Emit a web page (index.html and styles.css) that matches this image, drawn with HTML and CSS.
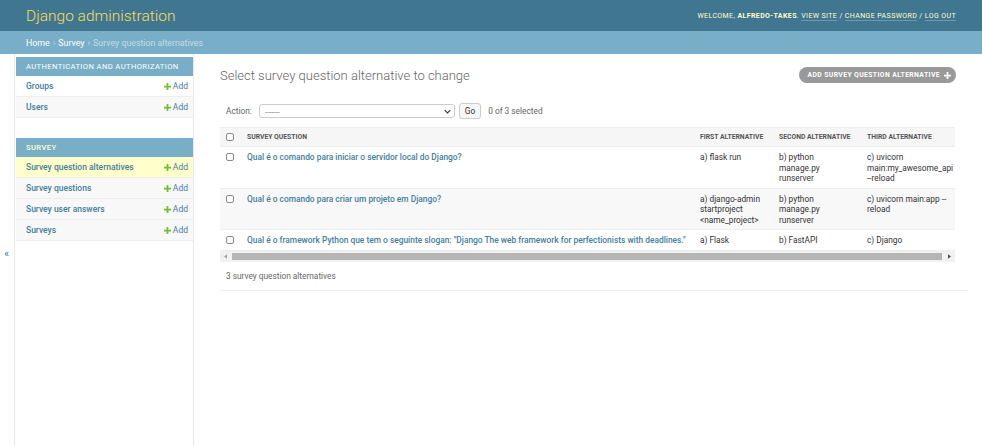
FILE: index.html
```html
<!DOCTYPE html>
<html lang="en">
<head>
<meta charset="utf-8">
<title>Select survey question alternative to change | Django site admin</title>
<link rel="stylesheet" href="styles.css">
</head>
<body>
<header class="header">
  <div class="branding">Django administration</div>
  <div class="user-tools">WELCOME, <strong>ALFREDO-TAKES</strong>. <a href="#">VIEW SITE</a> / <a href="#">CHANGE PASSWORD</a> / <a href="#">LOG OUT</a></div>
</header>
<nav class="breadcrumbs"><a href="#">Home</a><span class="sep">›</span><a href="#">Survey</a><span class="sep">›</span>Survey question alternatives</nav>
<div class="main">
  <button class="toggle-nav">«</button>
  <aside class="nav-sidebar">
    <div class="module">
      <div class="caption">AUTHENTICATION AND AUTHORIZATION</div>
      <div class="nav-row"><a href="#" class="model">Groups</a><a href="#" class="add"><svg class="plus" viewBox="0 0 8 8"><path d="M3 0h2v3h3v2H5v3H3V5H0V3h3z"/></svg>Add</a></div>
      <div class="nav-row alt"><a href="#" class="model">Users</a><a href="#" class="add"><svg class="plus" viewBox="0 0 8 8"><path d="M3 0h2v3h3v2H5v3H3V5H0V3h3z"/></svg>Add</a></div>
    </div>
    <div class="module">
      <div class="caption current">SURVEY</div>
      <div class="nav-row current"><a href="#" class="model">Survey question alternatives</a><a href="#" class="add"><svg class="plus" viewBox="0 0 8 8"><path d="M3 0h2v3h3v2H5v3H3V5H0V3h3z"/></svg>Add</a></div>
      <div class="nav-row alt"><a href="#" class="model">Survey questions</a><a href="#" class="add"><svg class="plus" viewBox="0 0 8 8"><path d="M3 0h2v3h3v2H5v3H3V5H0V3h3z"/></svg>Add</a></div>
      <div class="nav-row alt"><a href="#" class="model">Survey user answers</a><a href="#" class="add"><svg class="plus" viewBox="0 0 8 8"><path d="M3 0h2v3h3v2H5v3H3V5H0V3h3z"/></svg>Add</a></div>
      <div class="nav-row alt"><a href="#" class="model">Surveys</a><a href="#" class="add"><svg class="plus" viewBox="0 0 8 8"><path d="M3 0h2v3h3v2H5v3H3V5H0V3h3z"/></svg>Add</a></div>
    </div>
  </aside>
  <main class="content">
    <div class="content-head">
      <h1 class="title">Select survey question alternative to change</h1>
      <a href="#" class="addlink">ADD SURVEY QUESTION ALTERNATIVE<svg class="plus-w" viewBox="0 0 8 8"><path d="M3 0h2v3h3v2H5v3H3V5H0V3h3z"/></svg></a>
    </div>
    <div class="changelist">
      <div class="actions">
        <label class="action-label">Action:</label>
        <select class="action-select"><option>---------</option></select>
        <button class="go">Go</button>
        <span class="counter">0 of 3 selected</span>
      </div>
      <div class="results">
        <table class="result-list">
          <colgroup><col class="c0"><col class="c1"><col class="c2"><col class="c3"><col class="c4"></colgroup>
          <thead>
            <tr><th><input type="checkbox" class="cb"></th><th>SURVEY QUESTION</th><th>FIRST ALTERNATIVE</th><th>SECOND ALTERNATIVE</th><th>THIRD ALTERNATIVE</th></tr>
          </thead>
          <tbody>
            <tr><td><input type="checkbox" class="cb"></td><td><a href="#" class="q">Qual é o comando para iniciar o servidor local do Django?</a></td><td>a) flask run</td><td>b) python manage.py runserver</td><td>c) uvicorn main:my_awesome_api <span class="nw">--reload</span></td></tr>
            <tr class="alt"><td><input type="checkbox" class="cb"></td><td><a href="#" class="q">Qual é o comando para criar um projeto em Django?</a></td><td>a) django-admin startproject &lt;name_project&gt;</td><td>b) python manage.py runserver</td><td>c) uvicorn main:app --reload</td></tr>
            <tr><td><input type="checkbox" class="cb"></td><td><a href="#" class="q">Qual é o framework Python que tem o seguinte slogan: "Django The web framework for perfectionists with deadlines."</a></td><td>a) Flask</td><td>b) FastAPI</td><td>c) Django</td></tr>
          </tbody>
        </table>
      </div>
      <div class="hscroll" aria-hidden="true">
        <span class="hs-btn"><svg viewBox="0 0 4 6"><path d="M4 0v6L0 3z" fill="#a3a3a3"/></svg></span>
        <span class="hs-track"><span class="hs-thumb"></span></span>
        <span class="hs-btn"><svg viewBox="0 0 4 6"><path d="M0 0v6l4-3z" fill="#505050"/></svg></span>
      </div>
      <p class="paginator">3 survey question alternatives</p>
    </div>
  </main>
</div>
</body>
</html>
```

FILE: styles.css
```css
* { box-sizing: border-box; }
html, body { margin: 0; padding: 0; }
body {
  font-family: Roboto, "Liberation Sans", sans-serif;
  color: #333;
  background: #fff;
  font-size: 8.3px;
}
a { text-decoration: none; }

.header {
  height: 31px;
  background: #417690;
  display: flex;
  align-items: center;
  justify-content: space-between;
  padding: 0 26px;
}
.branding {
  color: #f5dd5d;
  font-size: 15.5px;
  font-weight: 300;
}
.user-tools {
  color: #ffc;
  font-size: 7px;
  letter-spacing: 0.4px;
}
.user-tools strong { font-weight: 700; }
.user-tools a {
  color: #ffc;
  border-bottom: 1px solid rgba(255,255,255,0.25);
}

.breadcrumbs {
  height: 23px;
  background: #79aec8;
  display: flex;
  align-items: center;
  padding: 0 26px;
  color: #c4dce8;
  font-size: 8.8px;
}
.breadcrumbs a { color: #fff; }
.breadcrumbs .sep { margin: 0 3px; }

.main {
  display: flex;
  min-height: calc(100vh - 54px);
}
.toggle-nav {
  width: 15px;
  flex: none;
  border: 0;
  border-right: 1px solid #eaeaea;
  background: #fff;
  color: #447e9b;
  font-size: 11px;
  padding: 6px 1px 0 0;
  font-family: Roboto, sans-serif;
}
.nav-sidebar {
  width: 179px;
  flex: none;
  border-right: 1px solid #eaeaea;
  padding: 3px 0 0 1px;
}
.module { margin-bottom: 20px; }
.caption {
  background: #79aec8;
  color: #fff;
  height: 19px;
  display: flex;
  align-items: center;
  padding-left: 10px;
  font-size: 7.6px;
  letter-spacing: 0.4px;
}
.caption.current { color: #ffc; font-weight: 500; }
.nav-row {
  height: 21px;
  display: flex;
  align-items: center;
  justify-content: space-between;
  padding: 0 5px 0 10px;
  border-bottom: 1px solid #eee;
  background: #fff;
}
.nav-row.alt { background: #f8f8f8; }
.nav-row.current { background: #ffc; }
.nav-row .model {
  color: #447e9b;
  font-size: 8.5px;
  font-weight: 500;
}
.nav-row .add {
  color: #447e9b;
  font-size: 8.5px;
  display: flex;
  align-items: center;
}
.plus { width: 7px; height: 7px; fill: #70bf2b; margin-right: 2px; }

.content {
  flex: 1;
  padding: 12px 26px 0 26px;
  min-width: 0;
}
.content-head {
  display: flex;
  align-items: center;
  justify-content: space-between;
  height: 18px;
}
.title {
  margin: 0;
  font-size: 13px;
  font-weight: 300;
  color: #666;
}
.addlink {
  display: flex;
  align-items: center;
  height: 16px;
  padding: 0 5px 0 8px;
  background: #999;
  border-radius: 8px;
  color: #fff;
  font-size: 6.8px;
  font-weight: 700;
  letter-spacing: 0.4px;
}
.plus-w { width: 7px; height: 7px; fill: #fff; margin-left: 4px; }

.changelist { margin-right: -12px; margin-top: 18px; }
.actions {
  display: flex;
  align-items: center;
  height: 18px;
  padding-left: 6px;
  color: #666;
}
.action-label { margin-right: 7px; }
.action-select {
  appearance: none;
  -webkit-appearance: none;
  width: 196px;
  height: 14px;
  border: 1px solid #ccc;
  border-radius: 3px;
  padding: 0 5px;
  font-family: Roboto, sans-serif;
  font-size: 6px;
  color: #333;
  background: #fff url("data:image/svg+xml;utf8,<svg xmlns='http://www.w3.org/2000/svg' viewBox='0 0 10 6'><path d='M1 1l4 4 4-4' fill='none' stroke='%23333' stroke-width='1.6'/></svg>") no-repeat right 3px center / 7px 5px;
}
.go {
  margin-left: 4px;
  height: 16px;
  padding: 0 5px;
  border: 1px solid #ccc;
  border-radius: 3px;
  background: #f6f6f6;
  color: #333;
  font-family: Roboto, sans-serif;
  font-size: 8.3px;
}
.counter { margin-left: 7px; color: #666; }

.results {
  width: calc(100% - 13px);
  overflow: hidden;
  margin-top: 7px;
}
.result-list {
  table-layout: fixed;
  width: 745px;
  border-collapse: collapse;
}
.c0 { width: 21px; }
.c1 { width: 453px; }
.c2 { width: 79px; }
.c3 { width: 88px; }
.c4 { width: 104px; }
.result-list th {
  background: #f6f6f6;
  border-top: 1px solid #eee;
  border-bottom: 1px solid #eee;
  text-align: left;
  font-size: 6.8px;
  font-weight: 700;
  color: #555;
  padding: 4px 6px;
  line-height: 10px;
  height: 19px;
}
.result-list td {
  padding: 5px 6px 4px;
  line-height: 10.5px;
  vertical-align: top;
  border-bottom: 1px solid #eee;
  color: #333;
  font-size: 8.3px;
  overflow-wrap: break-word;
}
.result-list tr.alt td { background: #f8f8f8; }
.result-list td:nth-child(2) { white-space: nowrap; }
.nw { white-space: nowrap; }
.q { color: #447e9b; font-weight: 500; font-size: 8.4px; }
.cb {
  appearance: none;
  -webkit-appearance: none;
  width: 8px;
  height: 8px;
  margin: 1px 0 0 0;
  border: 1px solid #8a8a8a;
  border-radius: 2px;
  background: #fff;
  vertical-align: top;
}

.hscroll {
  width: calc(100% - 13px);
  height: 11px;
  background: #f1f1f1;
  display: flex;
}
.hs-btn {
  width: 11px;
  flex: none;
  display: flex;
  align-items: center;
  justify-content: center;
}
.hs-btn svg { width: 3px; height: 5px; }
.hs-track {
  flex: 1;
  padding: 2px 1px;
  display: flex;
}
.hs-thumb {
  flex: 1;
  margin-right: 1px;
  background: #b5b5b5;
}

.paginator {
  margin: 0;
  padding: 9px 6px 9px;
  line-height: 10.5px;
  color: #666;
  border-bottom: 1px solid #eee;
}
```
